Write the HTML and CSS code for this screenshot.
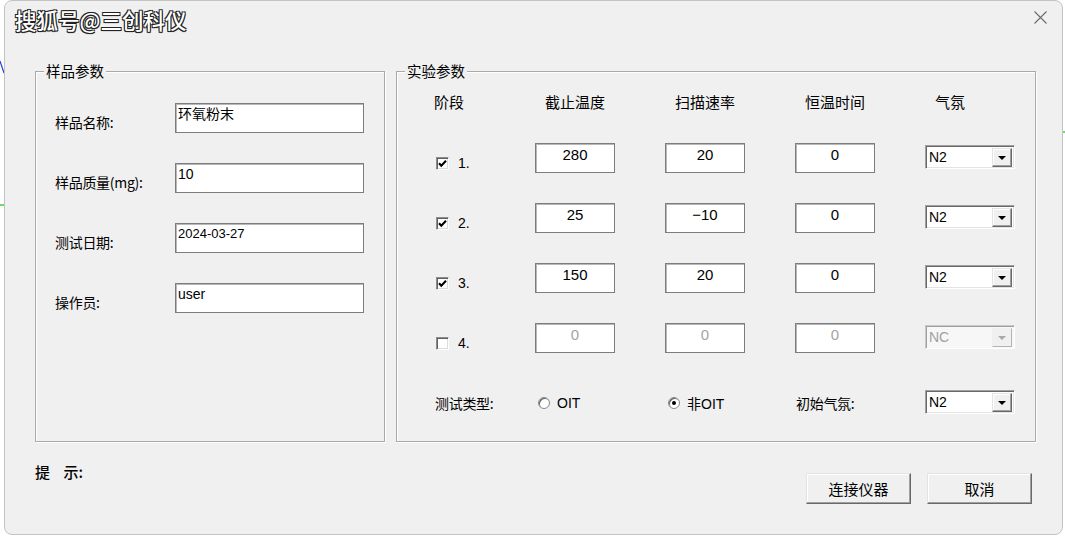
FILE: index.html
```html
<!DOCTYPE html>
<html lang="zh-CN">
<head>
<meta charset="utf-8">
<title>实验参数</title>
<link rel="stylesheet" href="styles.css">
</head>
<body>
<svg class="edge-marks" width="1065" height="537" viewBox="0 0 1065 537" aria-hidden="true">
  <path d="M0 61 L4 73" stroke="#2a3fe0" stroke-width="1.2" fill="none"/>
  <path d="M0 205 L4 205" stroke="#3ad23a" stroke-width="1.5" fill="none"/>
  <path d="M1063 132 L1065 132" stroke="#3ad23a" stroke-width="1.5" fill="none"/>
</svg>
<div class="window">
  <div class="titlebar">
    <svg class="close" width="13" height="13" viewBox="0 0 13 13" aria-hidden="true">
      <path d="M0.5 0.5 L12.5 12.5 M12.5 0.5 L0.5 12.5" stroke="#6a6a6a" stroke-width="1.1" fill="none"/>
    </svg>
  </div>
  <div class="groups">
    <fieldset class="group group-sample">
      <legend>样品参数</legend>
      <div class="sample-rows">
        <div class="field-row"><span class="field-label">样品名称:</span><div class="edit edit-left">环氧粉末</div></div>
        <div class="field-row"><span class="field-label">样品质量(mg):</span><div class="edit edit-left">10</div></div>
        <div class="field-row"><span class="field-label">测试日期:</span><div class="edit edit-left edit-date">2024-03-27</div></div>
        <div class="field-row"><span class="field-label">操作员:</span><div class="edit edit-left">user</div></div>
      </div>
    </fieldset>
    <fieldset class="group group-exp">
      <legend>实验参数</legend>
      <div class="exp-grid">
        <div class="head head-stage">阶段</div>
        <div class="head">截止温度</div>
        <div class="head">扫描速率</div>
        <div class="head">恒温时间</div>
        <div class="head head-gas">气氛</div>

        <div class="stage"><span class="check"><svg width="13" height="13" viewBox="0 0 13 13"><path d="M3 6.2 L5.3 8.8 L10 3.8" stroke="#000" stroke-width="2.1" fill="none"/></svg></span><span class="stage-num">1.</span></div>
        <div class="edit edit-num">280</div>
        <div class="edit edit-num">20</div>
        <div class="edit edit-num">0</div>
        <div class="combo"><span class="combo-text">N2</span><span class="combo-btn"><span class="arrow"></span></span></div>

        <div class="stage"><span class="check"><svg width="13" height="13" viewBox="0 0 13 13"><path d="M3 6.2 L5.3 8.8 L10 3.8" stroke="#000" stroke-width="2.1" fill="none"/></svg></span><span class="stage-num">2.</span></div>
        <div class="edit edit-num">25</div>
        <div class="edit edit-num">&minus;10</div>
        <div class="edit edit-num">0</div>
        <div class="combo"><span class="combo-text">N2</span><span class="combo-btn"><span class="arrow"></span></span></div>

        <div class="stage"><span class="check"><svg width="13" height="13" viewBox="0 0 13 13"><path d="M3 6.2 L5.3 8.8 L10 3.8" stroke="#000" stroke-width="2.1" fill="none"/></svg></span><span class="stage-num">3.</span></div>
        <div class="edit edit-num">150</div>
        <div class="edit edit-num">20</div>
        <div class="edit edit-num">0</div>
        <div class="combo"><span class="combo-text">N2</span><span class="combo-btn"><span class="arrow"></span></span></div>

        <div class="stage"><span class="check"></span><span class="stage-num">4.</span></div>
        <div class="edit edit-num is-disabled">0</div>
        <div class="edit edit-num is-disabled">0</div>
        <div class="edit edit-num is-disabled">0</div>
        <div class="combo is-disabled"><span class="combo-text">NC</span><span class="combo-btn"><span class="arrow"></span></span></div>

        <div class="bottom-label">测试类型:</div>
        <div class="radio-item"><span class="radio"></span><span class="radio-text">OIT</span></div>
        <div class="radio-item"><span class="radio is-on"></span><span class="radio-text">非OIT</span></div>
        <div class="bottom-label">初始气氛:</div>
        <div class="combo combo-bottom"><span class="combo-text">N2</span><span class="combo-btn"><span class="arrow"></span></span></div>
      </div>
    </fieldset>
  </div>
  <div class="footer">
    <div class="hint">提&nbsp;&nbsp;&nbsp;&nbsp;示:</div>
    <div class="buttons">
      <button class="btn" type="button">连接仪器</button>
      <button class="btn" type="button">取消</button>
    </div>
  </div>
</div>
<div class="watermark">搜狐号@三创科仪</div>
</body>
</html>
```

FILE: styles.css
```css
* { box-sizing: border-box; }

html, body {
  margin: 0;
  padding: 0;
  background: #ffffff;
}

body {
  width: 1065px;
  height: 537px;
  overflow: hidden;
  position: relative;
  font-family: "Liberation Sans", "Noto Sans CJK SC", sans-serif;
  font-size: 14px;
  color: #000;
}

.edge-marks {
  position: absolute;
  left: 0;
  top: 0;
}

.window {
  position: relative;
  margin-left: 4px;
  width: 1059px;
  height: 535px;
  background: #f0f0f0;
  border: 1px solid #c3c3c3;
  border-radius: 8px;
  padding: 0 26px 0 30px;
}

.titlebar {
  height: 61px;
  display: flex;
  justify-content: flex-end;
  align-items: flex-start;
  padding-top: 10px;
  margin-right: -11px;
}

.close { display: block; }

.groups {
  display: flex;
  gap: 11px;
}

.group {
  margin: 0;
  padding: 0;
  min-width: 0;
  height: 380px;
  border: 1px solid #a9a9a9;
  box-shadow: inset 1px 1px 0 #ffffff, 1px 1px 0 #ffffff;
}

.group legend {
  margin-left: 8px;
  padding: 0 2px;
  font-family: "Noto Sans CJK SC", sans-serif;
  font-size: 14.5px;
  line-height: 18px;
  background: #f0f0f0;
}

.group-sample { width: 350px; }
.group-exp { width: 640px; }

/* sample rows */
.sample-rows {
  padding: 23px 0 0 19px;
  display: flex;
  flex-direction: column;
  gap: 30px;
}

.field-row {
  display: flex;
  align-items: flex-start;
}

.field-label {
  width: 120px;
  margin-top: 10px;
  line-height: 18px;
  font-family: "Noto Sans CJK SC", sans-serif;
  font-size: 14px;
  letter-spacing: -0.3px;
}

.edit {
  background: #fff;
  height: 30px;
  border: 1px solid #7d7d7d;
  box-shadow: inset 1px 1px 0 #b8b8b8;
  line-height: 18px;
  white-space: nowrap;
}

.edit-left {
  width: 189px;
  padding: 1px 0 0 2px;
  font-family: "Liberation Sans", "Noto Sans CJK SC", sans-serif;
  font-size: 14px;
}

.edit-date { font-size: 13px; }

/* experiment grid */
.exp-grid {
  padding: 13px 0 0 37px;
  display: grid;
  grid-template-columns: 51px 80px 80px 80px 90px;
  grid-template-rows: 50px 60px 60px 60px 60px 30px;
  column-gap: 50px;
  align-items: start;
}

.head {
  justify-self: center;
  white-space: nowrap;
  font-family: "Noto Sans CJK SC", sans-serif;
  font-size: 15px;
  line-height: 18px;
}

.head-stage { justify-self: start; }
.head-gas { justify-self: start; margin-left: 10px; }

.stage {
  display: flex;
  align-items: center;
  height: 18px;
  margin-top: 11px;
  padding-left: 2px;
  white-space: nowrap;
}

.check {
  width: 13px;
  height: 13px;
  background: #fff;
  border: 1px solid;
  border-color: #8d8d8d #ffffff #ffffff #8d8d8d;
  box-shadow: inset 1px 1px 0 #5f5f5f, inset -1px -1px 0 #dcdcdc;
  position: relative;
  flex: none;
}

.check svg {
  position: absolute;
  left: -1px;
  top: -1px;
}

.stage-num {
  margin-left: 9px;
  font-size: 14px;
}

.edit-num {
  width: 80px;
  text-align: center;
  padding-top: 2px;
  font-size: 15px;
}

.edit.is-disabled { color: #a3a3a3; }

.combo {
  margin-top: 2px;
  width: 90px;
  height: 24px;
  background: #fff;
  border: 1px solid;
  border-color: #a0a0a0 #ffffff #ffffff #a0a0a0;
  box-shadow: inset 1px 1px 0 #696969, inset -1px -1px 0 #e3e3e3;
  display: flex;
  align-items: center;
  justify-content: space-between;
  padding: 2px 2px 2px 3px;
}

.combo-text {
  font-size: 14px;
  line-height: 18px;
}

.combo-btn {
  width: 20px;
  height: 19px;
  background: #f0f0f0;
  border: 1px solid;
  border-color: #e3e3e3 #696969 #696969 #e3e3e3;
  box-shadow: inset -1px -1px 0 #a0a0a0, inset 1px 1px 0 #ffffff;
  display: flex;
  align-items: center;
  justify-content: center;
}

.arrow {
  width: 0;
  height: 0;
  border-left: 4px solid transparent;
  border-right: 4px solid transparent;
  border-top: 4px solid #000;
  margin-top: 1px;
}

.combo.is-disabled { background: #f7f7f7; border-color: #c8c8c8 #ffffff #ffffff #c8c8c8; box-shadow: inset 1px 1px 0 #a0a0a0; }
.combo.is-disabled .combo-text { color: #a0a0a0; }
.combo.is-disabled .arrow { border-top-color: #a8a8a8; }
.combo.is-disabled .combo-btn { border-color: #f0f0f0 #b4b4b4 #b4b4b4 #f0f0f0; box-shadow: none; }

.combo-bottom { margin-top: 7px; }

.bottom-label {
  margin-top: 11px;
  margin-left: 1px;
  white-space: nowrap;
  font-family: "Noto Sans CJK SC", sans-serif;
  font-size: 14px;
  line-height: 18px;
  letter-spacing: -0.3px;
}

.radio-item {
  margin-top: 11px;
  height: 18px;
  display: flex;
  align-items: center;
  padding-left: 3px;
  white-space: nowrap;
}

.radio {
  width: 12px;
  height: 12px;
  border-radius: 50%;
  background: #fff;
  border: 1px solid #8a8a8a;
  box-shadow: inset 1px 1px 0 #5f5f5f;
  position: relative;
  flex: none;
}

.radio.is-on::after {
  content: "";
  position: absolute;
  left: 3px;
  top: 3px;
  width: 4px;
  height: 4px;
  border-radius: 50%;
  background: #000;
}

.radio-text {
  margin-left: 7px;
  font-family: "Liberation Sans", "Noto Sans CJK SC", sans-serif;
  font-size: 14px;
}

/* footer */
.footer {
  display: flex;
  justify-content: space-between;
  align-items: flex-start;
}

.hint {
  margin-top: 21px;
  font-family: "Noto Sans CJK SC", sans-serif;
  font-size: 15px;
  line-height: 18px;
  font-weight: 500;
}

.buttons {
  margin-top: 31px;
  margin-right: 4px;
  display: flex;
  gap: 16px;
}

.btn {
  width: 105px;
  height: 31px;
  margin: 0;
  padding: 0;
  background: #f0f0f0;
  border: 1px solid;
  border-color: #e3e3e3 #696969 #696969 #e3e3e3;
  box-shadow: inset -1px -1px 0 #a0a0a0, inset 1px 1px 0 #ffffff;
  font-family: "Noto Sans CJK SC", sans-serif;
  font-size: 15px;
  color: #000;
  line-height: 18px;
}

.watermark {
  position: absolute;
  left: 15px;
  top: 6px;
  font-family: "Noto Sans CJK SC", sans-serif;
  font-size: 21.5px;
  font-weight: 500;
  line-height: 28px;
  color: #ffffff;
  text-shadow: 1px 1px 0 #222, -1px -1px 0 #222, 1px -1px 0 #222, -1px 1px 0 #222, 0 1px 1px #000;
  white-space: nowrap;
}
```
